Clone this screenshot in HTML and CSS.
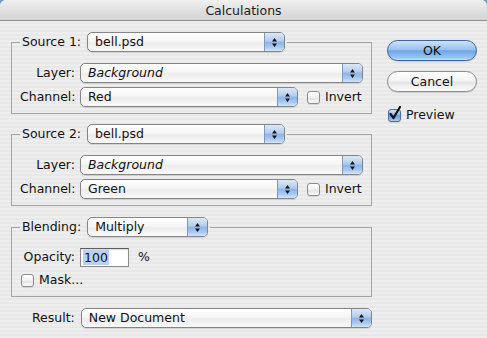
FILE: index.html
```html
<!DOCTYPE html>
<html lang="en">
<head>
    <meta charset="UTF-8">
    <title>Calculations</title>
    <link rel="stylesheet" href="styles.css">
</head>
<body>
    <div class="window">
        <div class="titlebar">Calculations</div>
        <div class="content">
            <div class="main">
                <fieldset class="group">
                    <legend class="legend">
                        <span class="label">Source 1:</span>
                        <div class="popup popup-source">
                            <span class="popup-text">bell.psd</span>
                            <span class="popup-cap"><svg width="7" height="11" viewBox="0 0 7 11"><path d="M3.5 1 L6 4.5 L1 4.5 Z M3.5 10 L6 6.5 L1 6.5 Z" fill="#111"/></svg></span>
                        </div>
                    </legend>
                    <div class="row">
                        <span class="label label-col">Layer:</span>
                        <div class="popup popup-wide">
                            <span class="popup-text italic">Background</span>
                            <span class="popup-cap"><svg width="7" height="11" viewBox="0 0 7 11"><path d="M3.5 1 L6 4.5 L1 4.5 Z M3.5 10 L6 6.5 L1 6.5 Z" fill="#111"/></svg></span>
                        </div>
                    </div>
                    <div class="row">
                        <span class="label label-col">Channel:</span>
                        <div class="popup popup-channel">
                            <span class="popup-text">Red</span>
                            <span class="popup-cap"><svg width="7" height="11" viewBox="0 0 7 11"><path d="M3.5 1 L6 4.5 L1 4.5 Z M3.5 10 L6 6.5 L1 6.5 Z" fill="#111"/></svg></span>
                        </div>
                        <span class="check invert-check"></span>
                        <span class="label check-label">Invert</span>
                    </div>
                </fieldset>

                <fieldset class="group">
                    <legend class="legend">
                        <span class="label">Source 2:</span>
                        <div class="popup popup-source">
                            <span class="popup-text">bell.psd</span>
                            <span class="popup-cap"><svg width="7" height="11" viewBox="0 0 7 11"><path d="M3.5 1 L6 4.5 L1 4.5 Z M3.5 10 L6 6.5 L1 6.5 Z" fill="#111"/></svg></span>
                        </div>
                    </legend>
                    <div class="row">
                        <span class="label label-col">Layer:</span>
                        <div class="popup popup-wide">
                            <span class="popup-text italic">Background</span>
                            <span class="popup-cap"><svg width="7" height="11" viewBox="0 0 7 11"><path d="M3.5 1 L6 4.5 L1 4.5 Z M3.5 10 L6 6.5 L1 6.5 Z" fill="#111"/></svg></span>
                        </div>
                    </div>
                    <div class="row">
                        <span class="label label-col">Channel:</span>
                        <div class="popup popup-channel">
                            <span class="popup-text">Green</span>
                            <span class="popup-cap"><svg width="7" height="11" viewBox="0 0 7 11"><path d="M3.5 1 L6 4.5 L1 4.5 Z M3.5 10 L6 6.5 L1 6.5 Z" fill="#111"/></svg></span>
                        </div>
                        <span class="check invert-check"></span>
                        <span class="label check-label">Invert</span>
                    </div>
                </fieldset>

                <fieldset class="group group-blend">
                    <legend class="legend">
                        <span class="label">Blending:</span>
                        <div class="popup popup-blend">
                            <span class="popup-text">Multiply</span>
                            <span class="popup-cap"><svg width="7" height="11" viewBox="0 0 7 11"><path d="M3.5 1 L6 4.5 L1 4.5 Z M3.5 10 L6 6.5 L1 6.5 Z" fill="#111"/></svg></span>
                        </div>
                    </legend>
                    <div class="row row-opacity">
                        <span class="label label-col">Opacity:</span>
                        <div class="field"><span class="selected">100</span></div>
                        <span class="label percent">%</span>
                    </div>
                    <div class="row row-mask">
                        <span class="check"></span>
                        <span class="label check-label">Mask...</span>
                    </div>
                </fieldset>

                <div class="result-row">
                    <span class="label result-label">Result:</span>
                    <div class="popup popup-result">
                        <span class="popup-text">New Document</span>
                        <span class="popup-cap"><svg width="7" height="11" viewBox="0 0 7 11"><path d="M3.5 1 L6 4.5 L1 4.5 Z M3.5 10 L6 6.5 L1 6.5 Z" fill="#111"/></svg></span>
                    </div>
                </div>
            </div>

            <div class="side">
                <div class="btn btn-default">OK</div>
                <div class="btn">Cancel</div>
                <div class="preview">
                    <span class="check checked"><svg width="14" height="15" viewBox="0 0 14 15"><path d="M2.5 8 L5.5 12 L12 1" fill="none" stroke="#111" stroke-width="2.2" stroke-linecap="round" stroke-linejoin="round"/></svg></span>
                    <span class="label check-label">Preview</span>
                </div>
            </div>
        </div>
    </div>
</body>
</html>
```

FILE: styles.css
```css
* {
    box-sizing: border-box;
}
body {
    margin: 0;
    background: #6d9bd4;
    font-family: "DejaVu Sans", "Lucida Grande", sans-serif;
    font-size: 12.5px;
    color: #111;
}
.window {
    width: 487px;
    height: 338px;
    border-radius: 6px 6px 0 0;
    overflow: hidden;
    background: repeating-linear-gradient(to bottom, #eeeeee 0, #eeeeee 2px, #e8e8e8 2px, #e8e8e8 4px);
}
.titlebar {
    height: 21px;
    border-bottom: 1px solid #8f8f8f;
    background: linear-gradient(#f0f0f0, #dedede 60%, #d4d4d4);
    text-align: center;
    line-height: 21px;
    color: #1c1c1c;
}
.content {
    display: flex;
    gap: 15px;
    padding: 11px 0 0 11px;
}
.main {
    width: 361px;
    display: flex;
    flex-direction: column;
}
.label {
    white-space: nowrap;
    line-height: 20px;
}
.group {
    margin: 0 0 10px 0;
    padding: 11px 8px 6px 8px;
    border: 1px solid #a3a3a3;
    min-width: 0;
}
.group-blend {
    margin-top: 1px;
    margin-bottom: 11px;
    padding-top: 10px;
    padding-bottom: 6px;
}
.legend {
    display: flex;
    align-items: center;
    gap: 6px;
    padding: 0 2px;
}
.row {
    display: flex;
    align-items: center;
}
.row + .row {
    margin-top: 4px;
}
.label-col {
    width: 55px;
    margin-right: 5px;
    text-align: right;
}

/* popup menus */
.popup {
    display: flex;
    height: 20px;
    border: 1px solid #858585;
    border-radius: 5px;
    background: linear-gradient(#ffffff, #f6f6f6 45%, #ececec 55%, #fafafa);
    box-shadow: 0 1px 1px rgba(0, 0, 0, 0.12);
    overflow: hidden;
}
.popup-text {
    flex: 1;
    padding-left: 7px;
    line-height: 18px;
    white-space: nowrap;
}
.italic {
    font-style: italic;
}
.popup-cap {
    width: 20px;
    display: flex;
    align-items: center;
    justify-content: center;
    border-left: 1px solid #7d98bd;
    background: linear-gradient(#dbe8f7, #b3ccec 45%, #8db4e6 52%, #a9cbf2 80%, #d4e5f8);
}
.popup-source {
    width: 198px;
}
.popup-wide {
    flex: 1;
}
.popup-channel {
    width: 218px;
}
.popup-blend {
    width: 121px;
}
.popup-result {
    width: 292px;
}

/* checkboxes */
.check {
    width: 13px;
    height: 13px;
    border: 1px solid #8c8c8c;
    border-radius: 3px;
    background: linear-gradient(#ffffff, #f0f0f0 50%, #e2e2e2 55%, #fbfbfb);
    box-shadow: 0 1px 1px rgba(0, 0, 0, 0.1);
    position: relative;
    flex: none;
}
.check.checked {
    border-color: #4a6fa3;
    background: linear-gradient(#d0e2f7, #8fb8ea 45%, #6b9fe2 52%, #a8ccf3);
}
.check.checked svg {
    position: absolute;
    left: -1px;
    top: -4px;
}
.invert-check {
    margin-left: 9px;
}
.check-label {
    margin-left: 5px;
}

/* blending */
.field {
    width: 49px;
    height: 19px;
    border: 1px solid #8a8a8a;
    border-top-color: #5e5e5e;
    background: #fff;
    box-shadow: inset 0 1px 1px rgba(0, 0, 0, 0.15);
    padding: 0 0 0 2px;
    line-height: 17px;
}
.selected {
    background: #b6d2f4;
    padding: 0 1px;
}
.percent {
    margin-left: 9px;
}
.row-mask {
    padding-left: 1px;
}
.row.row-mask {
    margin-top: 3px;
}

.result-row {
    display: flex;
    align-items: center;
}
.result-label {
    width: 64px;
    margin-right: 6px;
    text-align: right;
}

/* buttons */
.side {
    width: 90px;
    padding-top: 8px;
    display: flex;
    flex-direction: column;
}
.btn {
    height: 21px;
    border: 1px solid #8d8d8d;
    border-radius: 11px;
    background: linear-gradient(#ffffff, #f4f4f4 45%, #e6e6e6 55%, #fbfbfb);
    box-shadow: 0 1px 1px rgba(0, 0, 0, 0.15);
    text-align: center;
    line-height: 19px;
}
.btn + .btn {
    margin-top: 10px;
}
.btn-default {
    border-color: #3d64a0;
    background: linear-gradient(#cfe2f8, #99c0ef 45%, #6ea4e8 52%, #93c2f5 85%, #c2e0fc);
}
.preview {
    display: flex;
    align-items: center;
    margin-top: 13px;
    padding-left: 1px;
}
```
